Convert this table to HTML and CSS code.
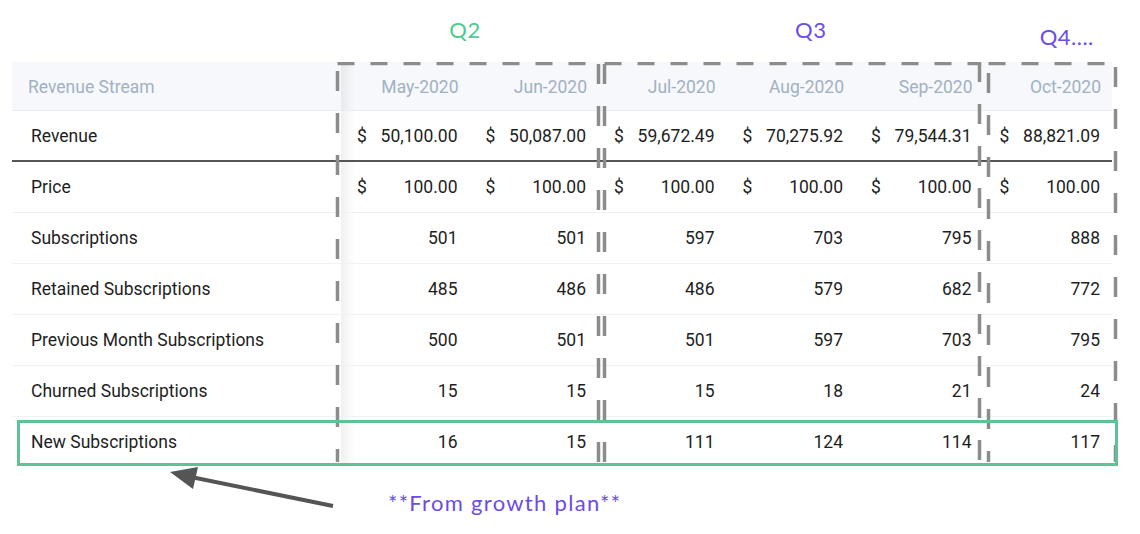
FILE: index.html
```html
<!DOCTYPE html>
<html lang="en">
<head>
<meta charset="utf-8">
<title>Revenue Stream</title>
<link rel="stylesheet" href="styles.css">
</head>
<body>
<div class="page">
  <div class="quarters">
    <div class="q q2">Q2</div>
    <div class="q q3">Q3</div>
    <div class="q q4">Q4....</div>
  </div>
  <div class="table-wrap">
    <table class="grid">
      <colgroup>
        <col class="c-label">
        <col class="c-m"><col class="c-m"><col class="c-m"><col class="c-m"><col class="c-m"><col class="c-m">
      </colgroup>
      <thead>
        <tr>
          <th class="label">Revenue Stream</th>
          <th>May-2020</th><th>Jun-2020</th><th>Jul-2020</th><th>Aug-2020</th><th>Sep-2020</th><th>Oct-2020</th>
        </tr>
      </thead>
      <tbody>
        <tr class="rev">
          <td class="label">Revenue</td>
          <td><span class="cur"><span>$</span><span>50,100.00</span></span></td>
          <td><span class="cur"><span>$</span><span>50,087.00</span></span></td>
          <td><span class="cur"><span>$</span><span>59,672.49</span></span></td>
          <td><span class="cur"><span>$</span><span>70,275.92</span></span></td>
          <td><span class="cur"><span>$</span><span>79,544.31</span></span></td>
          <td><span class="cur"><span>$</span><span>88,821.09</span></span></td>
        </tr>
        <tr>
          <td class="label">Price</td>
          <td><span class="cur"><span>$</span><span>100.00</span></span></td>
          <td><span class="cur"><span>$</span><span>100.00</span></span></td>
          <td><span class="cur"><span>$</span><span>100.00</span></span></td>
          <td><span class="cur"><span>$</span><span>100.00</span></span></td>
          <td><span class="cur"><span>$</span><span>100.00</span></span></td>
          <td><span class="cur"><span>$</span><span>100.00</span></span></td>
        </tr>
        <tr>
          <td class="label">Subscriptions</td>
          <td>501</td><td>501</td><td>597</td><td>703</td><td>795</td><td>888</td>
        </tr>
        <tr>
          <td class="label">Retained Subscriptions</td>
          <td>485</td><td>486</td><td>486</td><td>579</td><td>682</td><td>772</td>
        </tr>
        <tr>
          <td class="label">Previous Month Subscriptions</td>
          <td>500</td><td>501</td><td>501</td><td>597</td><td>703</td><td>795</td>
        </tr>
        <tr>
          <td class="label">Churned Subscriptions</td>
          <td>15</td><td>15</td><td>15</td><td>18</td><td>21</td><td>24</td>
        </tr>
        <tr class="last">
          <td class="label">New Subscriptions</td>
          <td>16</td><td>15</td><td>111</td><td>124</td><td>114</td><td>117</td>
        </tr>
      </tbody>
    </table>
    <svg class="dashes" width="1110" height="410" viewBox="0 0 1110 410" aria-hidden="true">
      <g stroke="#8c8c8c" stroke-width="3.5" fill="none">
        <line x1="325.5" y1="1.5" x2="586.5" y2="1.5" stroke-dasharray="17 16"/>
        <line x1="592.5" y1="1.5" x2="967.5" y2="1.5" stroke-dasharray="17 16"/>
        <line x1="976.5" y1="1.5" x2="1103.5" y2="1.5" stroke-dasharray="17 16"/>
        <line x1="325.5" y1="9" x2="325.5" y2="400" stroke-dasharray="20 22"/>
        <line x1="586.5" y1="2" x2="586.5" y2="400" stroke-dasharray="20 22"/>
        <line x1="592.5" y1="2" x2="592.5" y2="400" stroke-dasharray="20 22"/>
        <line x1="967.5" y1="0" x2="967.5" y2="400" stroke-dasharray="20 22"/>
        <line x1="976.5" y1="11" x2="976.5" y2="400" stroke-dasharray="20 22"/>
        <line x1="1103.5" y1="5" x2="1103.5" y2="400" stroke-dasharray="20 22"/>
      </g>
    </svg>
    <div class="highlight"></div>
  </div>
  <div class="note">
    <svg class="arrow" width="175" height="45" viewBox="0 0 175 45" aria-hidden="true">
      <line x1="26" y1="10" x2="168" y2="39" stroke="#555" stroke-width="4"/>
      <polygon points="5,5 33,0 28,22" fill="#555"/>
    </svg>
    <div class="note-text">**From growth plan**</div>
  </div>
</div>
</body>
</html>
```
FILE: styles.css
```css
* { box-sizing: border-box; }
html, body { margin: 0; padding: 0; background: #fff; }
body { font-family: Roboto, "Liberation Sans", sans-serif; color: #1e1e1e; }
.page { width: 1140px; height: 534px; overflow: hidden; }

.quarters {
  display: grid;
  grid-template-columns: 329px 257px 385.5px 128.5px;
  margin-left: 12px;
  height: 62px;
  font-family: Lato, "Noto Sans", sans-serif;
  font-size: 22px;
  line-height: 26px;
  letter-spacing: 0.5px;
}
.q2 { color: #4fca8e; text-align: center; padding-right: 9px; padding-top: 17px; grid-column: 2; }
.q3 { color: #6a4ce8; text-align: center; padding-left: 40px; padding-top: 17px; }
.q4 { color: #6a4ce8; text-align: center; padding-left: 38px; padding-top: 24px; }

.table-wrap { position: relative; margin-left: 12px; width: 1110px; }

.grid {
  border-collapse: collapse;
  table-layout: fixed;
  width: 1100px;
  font-size: 17.5px;
}
.c-label { width: 329px; }
.c-m { width: 128.5px; }

.grid th {
  background: #f6f8fb;
  color: #a2b0c4;
  font-weight: 400;
  font-size: 17.5px;
  height: 48px;
  padding: 2px 11px 0 8px;
  text-align: right;
  border-bottom: 1px solid #e9edf3;
}
.grid th.label { text-align: left; padding-left: 16px; }
.grid td {
  height: 51px;
  text-align: right;
  padding: 1px 12px 0 16px;
  border-bottom: 1px solid #eef1f6;
  white-space: nowrap;
}
.grid td.label { text-align: left; padding-left: 19px; }
.grid .label { position: relative; }
.grid .label::after {
  content: "";
  position: absolute;
  top: 0; bottom: 0; right: -14px;
  width: 14px;
  background: linear-gradient(to right, rgba(0,0,0,0.06), rgba(0,0,0,0));
}
.grid tr.rev td { height: 51px; border-bottom: 2px solid #555; }
.grid tr.last td { border-bottom: none; }

.cur { display: flex; justify-content: space-between; }

.dashes { position: absolute; left: 0; top: 0; pointer-events: none; }

.highlight {
  position: absolute;
  left: 5px; top: 358px;
  width: 1101px; height: 46px;
  border: 3px solid #5cc494;
}

.note { display: flex; align-items: flex-start; padding-left: 165px; }
.arrow { display: block; }
.note-text {
  margin-left: 48px;
  margin-top: 24px;
  font-family: Lato, "Noto Sans", sans-serif;
  font-size: 22px;
  line-height: 24px;
  letter-spacing: 1.3px;
  color: #6a4ce8;
}
```
